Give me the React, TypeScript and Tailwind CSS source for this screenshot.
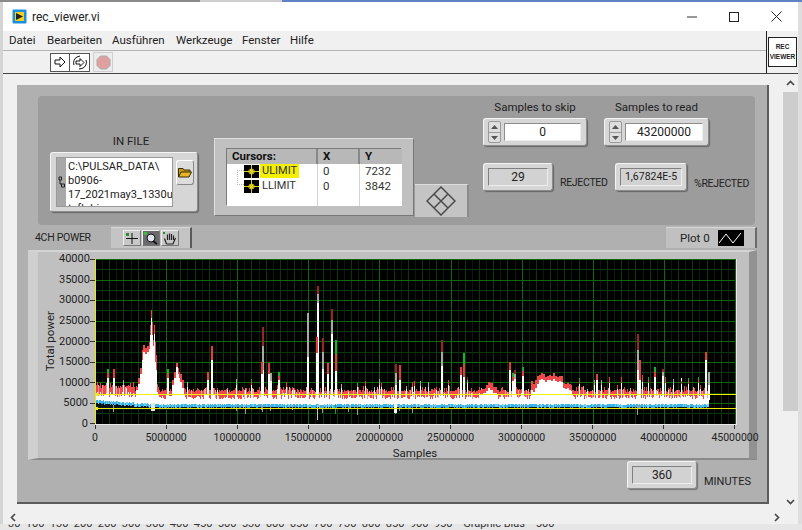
import React from "react";

const W = 641;
const H = 165;
const yv = (py: number) => py - 259;
const xv = (px: number) => px - 95;

type Spike = [number, number, string, number?];
// x, top y, kind (r red, d dark red, g grey, e green tip, w white), y where solid white starts
const spikes: Spike[] = [
  [107, 369, "e"], [113, 369, "r"], [123, 380, "g"], [126, 388, "w"], [167, 369, "e"], [187, 382, "g"], [207, 372, "r"],
  [211, 346, "r", 360], [217, 388, "r"], [227, 388, "g"], [236, 379, "g"], [245, 388, "g"], [251, 379, "e"],
  [262, 327, "d", 370], [261, 362, "r"], [268, 363, "r"], [270, 373, "g"], [278, 372, "e"], [277, 385, "r"],
  [286, 382, "r"], [292, 387, "r"], [294, 388, "r"], [307, 313, "g", 357], [317, 286, "d", 303], [316, 337, "r", 353],
  [322, 338, "d", 369], [327, 363, "r"], [331, 309, "d", 334], [335, 340, "e", 371], [341, 384, "g"], [348, 391, "g"],
  [357, 383, "e"], [365, 381, "r"], [374, 387, "g"], [379, 379, "g"], [381, 383, "r"], [395, 364, "d", 385], [399, 365, "r", 380],
  [406, 386, "g"], [412, 382, "r"], [414, 381, "r"], [420, 381, "g"], [428, 382, "g"], [436, 387, "r"], [441, 340, "d", 366],
  [448, 380, "r"], [460, 367, "r", 375], [463, 353, "e", 377], [467, 377, "d"], [509, 362, "r", 370], [512, 373, "e"],
  [514, 370, "d"], [522, 367, "e", 376], [579, 378, "e"], [587, 389, "g"], [596, 374, "r", 380], [594, 380, "g"],
  [601, 380, "g"], [609, 377, "r"], [617, 385, "r"], [621, 377, "r"], [637, 334, "d", 370], [639, 360, "r", 380],
  [642, 375, "r"], [648, 377, "e"], [654, 367, "e"], [657, 389, "r"], [662, 369, "d", 376], [665, 377, "r"], [668, 388, "r"],
  [673, 379, "g"], [681, 378, "w"], [688, 378, "e"], [698, 377, "e"], [700, 385, "r"], [705, 352, "r", 360], [708, 372, "g", 385],
];

// hump outlines: [x, red top, white top]
const humpPoints: number[][] = [
  [136, 387, 390], [138, 378, 384], [140, 368, 374], [142, 350, 360], [143, 345, 352], [145, 348, 354], [147, 346, 352],
  [149, 342, 349], [150, 325, 335], [151, 310, 318], [152, 322, 335], [153, 340, 346], [154, 325, 334], [155, 342, 362], [156, 355, 370], [157, 384, 392],
  [168, 392, 396], [172, 380, 385], [174, 372, 378], [176, 363, 367], [178, 368, 374], [179, 372, 378], [180, 374, 382], [182, 380, 388], [184, 388, 394],
  [480, 390, 395], [483, 389, 393], [486, 385, 391], [488, 382, 388], [490, 383, 390], [493, 387, 393], [497, 390, 395],
  [530, 390, 396], [531, 381, 390], [533, 384, 392], [535, 380, 388], [537, 376, 384], [539, 375, 380], [541, 373, 379], [543, 374, 380],
  [545, 377, 382], [547, 376, 380], [549, 375, 380], [551, 376, 381], [553, 373, 379], [555, 376, 381], [557, 377, 382], [559, 376, 381], [561, 376, 382],
  [563, 383, 388], [565, 384, 389], [567, 383, 388], [569, 384, 390], [571, 385, 391], [572, 390, 394],
];

function rnd(i: number) {
  const s = Math.sin(i * 12.9898) * 43758.5453;
  return s - Math.floor(s);
}

function Plot() {
  const majorX = Array.from({ length: 10 }, (_, i) => (i * 640) / 9);
  const medX = Array.from({ length: 46 }, (_, i) => (i * 640) / 45);
  const weakX = Array.from({ length: 90 }, (_, i) => (i * 640) / 90);
  const majorY = Array.from({ length: 9 }, (_, i) => (i * 164.5) / 8);
  const medY = Array.from({ length: 17 }, (_, i) => (i * 164.5) / 16);
  const cols = Array.from({ length: 709 - 96 }, (_, i) => 96 + i);
  return (
    <svg width={W} height={H} className="block" shapeRendering="crispEdges">
      <rect width={W} height={H} fill="#000" />
      {weakX.map((x) => (
        <line key={"wx" + x} x1={x + 0.5} x2={x + 0.5} y1={0} y2={H} stroke="#061e06" />
      ))}
      {medX.map((x) => (
        <line key={"mx" + x} x1={x + 0.5} x2={x + 0.5} y1={0} y2={H} stroke="#0a3a0a" />
      ))}
      {medY.map((y) => (
        <line key={"my" + y} x1={0} x2={W} y1={y + 0.5} y2={y + 0.5} stroke="#0a3a0a" />
      ))}
      {majorX.map((x) => (
        <line key={"X" + x} x1={x + 0.5} x2={x + 0.5} y1={0} y2={H} stroke="#0c6a0c" />
      ))}
      {majorY.map((y) => (
        <line key={"Y" + y} x1={0} x2={W} y1={y + 0.5} y2={y + 0.5} stroke="#0c6a0c" />
      ))}
      {cols.map((x) => {
        const bump = rnd(x + 50) > 0.82;
        const redTop = (x < 135 ? 385 : 389) + Math.round(rnd(x) * 3) - (bump ? 3 : 0);
        const whiteTop = (x < 135 ? 394 : 396) + Math.round(rnd(x + 99) * 3) - (bump ? 3 : 0);
        const blueTop = (x < 160 ? 400 + 4 * Math.min(1, (x - 96) / 60) : 404) + Math.round(rnd(x + 7) * 0.8);
        const blackBottom = x < 200 ? 409 : 407;
        return (
          <g key={x}>
            <rect x={xv(x)} y={yv(blueTop + 3)} width={1} height={Math.max(1, blackBottom - blueTop - 2)} fill="#06141e" />
            <rect x={xv(x)} y={yv(redTop)} width={1} height={whiteTop - redTop} fill={rnd(x + 3) > 0.85 ? "#f79a9a" : "#f04848"} />
            <rect x={xv(x)} y={yv(whiteTop)} width={1} height={blueTop - whiteTop} fill="#fff" />
            <rect x={xv(x)} y={yv(blueTop)} width={1} height={3} fill={rnd(x + 11) > 0.8 ? "#6fd0f0" : "#38b4e8"} />
          </g>
        );
      })}
      {humpPoints.map(([x, red, white], i) => {
        const next = humpPoints[i + 1];
        const w = next && next[0] > x && next[0] - x < 6 ? next[0] - x : 1;
        return (
          <g key={"h" + x}>
            <rect x={xv(x)} y={yv(red)} width={w} height={white - red} fill="#f04848" />
            <rect x={xv(x)} y={yv(white)} width={w} height={403 - white} fill="#fff" />
          </g>
        );
      })}
      {spikes.map(([x, top, kind, sw], i) => {
        const solid = sw ?? top + Math.round((395 - top) * 0.35);
        const tip = kind === "e" ? "#18b02c" : kind === "d" ? "#9c2424" : kind === "g" ? "#a8a8a8" : kind === "w" ? "#fff" : "#e83c3c";
        const mid = kind === "d" || kind === "g" ? "#a8a8a8" : "#e83c3c";
        const tipEnd = top + Math.max(3, Math.round((solid - top) * 0.45));
        const below = rnd(i) > 0.7 ? 2 + Math.round(rnd(i + 5) * 8) : 0;
        const w = top < 375 ? 2 : 1;
        return (
          <g key={"s" + i}>
            <rect x={xv(x)} y={yv(tipEnd)} width={w} height={Math.max(0, solid - tipEnd)} fill={mid} />
            <rect x={xv(x)} y={yv(top)} width={w} height={tipEnd - top} fill={tip} />
            <rect x={xv(x)} y={yv(solid)} width={w} height={Math.max(0, 400 - solid)} fill="#fff" />
            {below > 0 && <rect x={xv(x)} y={yv(405)} width={1} height={below} fill="#9a9a9a" />}
          </g>
        );
      })}
      <rect x={xv(317)} y={yv(405)} width={1} height={15} fill="#c8c8c8" />
      <rect x={xv(322)} y={yv(405)} width={1} height={8} fill="#9a9a9a" />
      <rect x={xv(335)} y={yv(405)} width={1} height={9} fill="#18a02c" />
      <rect x={xv(394)} y={yv(404)} width={3} height={9} fill="#e8fbff" />
      <rect x={xv(637)} y={yv(405)} width={1} height={10} fill="#9a9a9a" />
      <rect x={xv(151)} y={yv(403)} width={4} height={8} fill="#e6e6e6" />
      <line x1={0} x2={W} y1={135.5} y2={135.5} stroke="#f0f000" />
      <line x1={0} x2={W} y1={149.5} y2={149.5} stroke="#e8e800" />
      <line x1={0.5} x2={0.5} y1={0} y2={H} stroke="#e8e800" />
      <path d="M0 133 L3 135.5 L0 138 M0 147 L3 149.5 L0 152" stroke="#f0f000" fill="none" />
    </svg>
  );
}

const raised = "rounded-[3px] border border-t-[#f4f4f4] border-l-[#f4f4f4] border-r-[#8c8c8c] border-b-[#8c8c8c] bg-[#d6d6d6] shadow-[1px_1px_1px_rgba(0,0,0,0.35)]";
const sunkenIndicator = "flex items-center justify-center border border-[#808080] border-r-[#efefef] border-b-[#efefef] bg-[#d2d2d2]";
const capsLabel = "text-[10.5px] leading-[14px] tracking-[-0.3px] whitespace-nowrap";

function Spin({ value, width }: { value: string; width: string }) {
  return (
    <div className={`${raised} flex h-[28px] items-center gap-[3px] pl-[4px] pr-[5px] ${width}`}>
      <div className="flex h-[22px] w-[13px] shrink-0 flex-col gap-[1px] rounded-[2px] border border-[#9a9a9a] bg-[#dedede]">
        <div className="flex flex-1 items-center justify-center">
          <svg width="7" height="4"><path d="M3.5 0 L7 4 H0Z" fill="#555" /></svg>
        </div>
        <div className="flex flex-1 items-center justify-center border-t border-[#9a9a9a]">
          <svg width="7" height="4"><path d="M0 0 H7 L3.5 4Z" fill="#555" /></svg>
        </div>
      </div>
      <div className="flex h-[18px] flex-1 items-center justify-center border border-[#8c8c8c] border-r-[#eee] border-b-[#eee] bg-white text-[12px]">
        {value}
      </div>
    </div>
  );
}

function Indicator({ value, width, small }: { value: string; width: string; small?: boolean }) {
  return (
    <div className={`${raised} flex h-[28px] shrink-0 items-center justify-center p-[4px] ${width}`}>
      <div className={`${sunkenIndicator} h-full w-full whitespace-nowrap ${small ? "text-[10.5px]" : "text-[12px]"}`}>{value}</div>
    </div>
  );
}

function CursorIcon() {
  return (
    <svg width="15" height="13" className="shrink-0">
      <rect width="15" height="13" fill="#000" />
      <path d="M0 6.5 H15 M7.5 0 V13" stroke="#d8c820" />
      <path d="M7.5 3.5 L11 6.5 L7.5 9.5 L4 6.5Z M5.5 4.5 L9.5 8.5 M9.5 4.5 L5.5 8.5" stroke="#e8d820" fill="none" />
    </svg>
  );
}

function PaletteBtn({ children, active }: { children: React.ReactNode; active?: boolean }) {
  return (
    <div className={`flex h-[16px] w-[18px] shrink-0 items-center justify-center border border-t-[#eee] border-l-[#eee] border-r-[#777] border-b-[#777] ${active ? "bg-[#6a6a6a]" : "bg-[#c8c8c8]"}`}>
      {children}
    </div>
  );
}

export default function App() {
  const yLabels = ["40000", "35000", "30000", "25000", "20000", "15000", "10000", "5000", "0"];
  const xLabels = ["0", "5000000", "10000000", "15000000", "20000000", "25000000", "30000000", "35000000", "40000000", "45000000"];
  return (
    <div className="flex h-[530px] w-[802px] flex-col overflow-hidden bg-[#dcdcdc] text-[#222]" style={{ fontFamily: 'Roboto, "Noto Sans", sans-serif' }}>
      <div className="flex h-[2px] shrink-0">
        <div className="w-[200px] bg-[#8a8a8a]" />
        <div className="w-[82px] bg-[#cfcfcf]" />
        <div className="flex-1 bg-[#5f83c4]" />
      </div>
      <div className="flex min-h-0 flex-1">
        <div className="w-[3px] shrink-0 bg-[#d4d4d4]" />
        <div className="flex w-[795px] shrink-0 flex-col bg-[#f0f0f0]">
          {/* title bar */}
          <div className="flex h-[29px] shrink-0 items-center bg-white pl-[9px] pr-[16px]">
            <svg width="15" height="15" className="shrink-0">
              <rect x="0.5" y="0.5" width="14" height="14" rx="1" fill="#1d8fe0" />
              <rect x="3" y="3" width="9" height="9" fill="#f5d020" />
              <path d="M4 4 L11 7.5 L4 11Z" fill="#222" />
            </svg>
            <span className="ml-[5px] text-[12px] text-[#222]">rec_viewer.vi</span>
            <div className="ml-auto flex items-center gap-[32px]">
              <svg width="10" height="11"><path d="M0 6 H10" stroke="#333" /></svg>
              <svg width="10" height="10"><rect x="0.5" y="0.5" width="9" height="9" fill="none" stroke="#222" /></svg>
              <svg width="11" height="11"><path d="M0.5 0.5 L10.5 10.5 M10.5 0.5 L0.5 10.5" stroke="#222" /></svg>
            </div>
          </div>
          {/* menu + toolbar */}
          <div className="flex h-[43px] shrink-0">
            <div className="flex min-w-0 flex-1 flex-col">
              <div className="flex h-[20px] items-center border-b border-[#b4b4b4] pl-[6px] text-[11.5px]">
                <span className="w-[38px]">Datei</span>
                <span className="w-[65px]">Bearbeiten</span>
                <span className="w-[64px]">Ausführen</span>
                <span className="w-[66px]">Werkzeuge</span>
                <span className="w-[48px]">Fenster</span>
                <span>Hilfe</span>
              </div>
              <div className="flex flex-1 items-center border-b border-[#444] pl-[47px]">
                <div className="flex h-[19px] w-[40px] items-center border border-[#555] bg-white">
                  <div className="flex h-full w-[19px] items-center justify-center border-r border-[#555]">
                    <svg width="12" height="12"><path d="M1 4 H6 V1 L11 6 L6 11 V8 H1Z" fill="#fff" stroke="#111" /></svg>
                  </div>
                  <div className="flex flex-1 items-center justify-center">
                    <svg width="16" height="15">
                      <path d="M4 6 H8 V3.5 L12 7.5 L8 11.5 V9 H4Z" fill="#fff" stroke="#111" />
                      <path d="M2 10 A6.5 6.5 0 0 1 5 2 L8 1 M14 5 A6.5 6.5 0 0 1 10 13.5 L7 14" fill="none" stroke="#111" />
                    </svg>
                  </div>
                </div>
                <div className="ml-[3px] flex h-[20px] w-[20px] items-center justify-center border border-[#cfcfcf] bg-[#ececec]">
                  <svg width="15" height="15">
                    <path d="M4.5 1 H10.5 L14 4.5 V10.5 L10.5 14 H4.5 L1 10.5 V4.5Z" fill="#e0a0a0" stroke="#a8a8a8" />
                  </svg>
                </div>
              </div>
            </div>
            <div className="flex w-[32px] shrink-0 items-center border-b border-l border-b-[#444] border-l-[#222] pl-[1px]">
              <div className="flex h-[30px] w-[29px] flex-col items-center justify-center border border-[#222] bg-white text-[6.5px] font-bold leading-[10px]" style={{ fontFamily: '"Liberation Sans", sans-serif' }}>
                <span>REC</span>
                <span>VIEWER</span>
              </div>
            </div>
          </div>
          {/* content */}
          <div className="flex min-h-0 flex-1">
            <div className="min-w-0 flex-1 pl-[14px] pr-[14px] pt-[11px]">
              <div className="h-[419px] w-[752px] border-b-[2px] border-r-[2px] border-b-[#5c5c5c] border-r-[#5c5c5c] bg-[#b0b0b0] pt-[11px]">
                {/* top panel */}
                <div className="ml-[21px] flex h-[129px] w-[717px] rounded-[4px] bg-[#9c9c9c]">
                  {/* in file */}
                  <div className="ml-[12px] flex w-[148px] shrink-0 flex-col pt-[38px]">
                    <div className="pl-[14px] text-center text-[11.5px] leading-[14px]">IN FILE</div>
                    <div className={`${raised} mt-[4px] flex h-[60px] items-start gap-[3px] pl-[5px] pt-[4px]`}>
                      <div className="flex h-[50px] w-[117px] shrink-0 overflow-hidden border border-[#9a9a9a]">
                        <div className="flex w-[9px] shrink-0 items-center justify-center bg-[#a8a8a8]">
                          <svg width="7" height="13"><path d="M1 1 H3.5 V4 H1Z M3.5 8 H6.5 V11 H3.5Z M2 4 V8 H4" fill="none" stroke="#222" /></svg>
                        </div>
                        <div className="flex-1 whitespace-nowrap bg-white pl-[2px] pt-[2px] text-[11px] leading-[14px] text-[#222]">
                          C:\PULSAR_DATA\<br />b0906-<br />17_2021may3_1330u<br />tcfb.bin
                        </div>
                      </div>
                      <div className="mt-[3px] flex h-[25px] w-[18px] shrink-0 items-center justify-center rounded-[3px] border border-t-[#fff] border-l-[#fff] border-r-[#888] border-b-[#888] bg-[#dcdcdc]">
                        <svg width="14" height="11">
                          <path d="M0.5 10 V1.5 H5 L6 3 H12 V5" fill="#c89a1c" stroke="#3a2a00" />
                          <path d="M0.5 10 L3 5 H13.5 L11 10Z" fill="#e8b52a" stroke="#3a2a00" />
                        </svg>
                      </div>
                    </div>
                  </div>
                  {/* cursors */}
                  <div className="ml-[16px] mt-[42px] flex h-[78px] w-[200px] shrink-0 border border-t-[#dfdfdf] border-l-[#dfdfdf] border-r-[#777] border-b-[#777] bg-[#c0c0c0] pl-[12px] pt-[10px]">
                    <div className="flex h-[57px] w-[175px] flex-col bg-white text-[11.5px] leading-[14px] shadow-[-1px_-1px_0_#7a7a7a]">
                      <div className="flex h-[15px] bg-[#b8b8b8] font-bold text-[#111]">
                        <div className="w-[91px] border-r-[2px] border-r-[#888] pl-[5px]">Cursors:</div>
                        <div className="w-[42px] border-r-[2px] border-r-[#888] pl-[5px]">X</div>
                        <div className="flex-1 pl-[5px]">Y</div>
                      </div>
                      <div className="flex flex-1">
                        <div className="relative w-[91px] border-r border-r-[#d4d4d4] pl-[17px]">
                          <div className="absolute left-[10px] top-[6px] h-[15px] w-[7px] border border-r-0 border-dotted border-[#b8b8b8]" />
                          <div className="flex h-[14px] items-center">
                            <CursorIcon />
                            <span className="ml-[1px] bg-[#f4f000] px-[2px] text-[11px] text-[#333]">ULIMIT</span>
                          </div>
                          <div className="mt-[1px] flex h-[14px] items-center">
                            <CursorIcon />
                            <span className="ml-[1px] px-[2px] text-[11px] text-[#333]">LLIMIT</span>
                          </div>
                        </div>
                        <div className="w-[42px] border-r border-r-[#d4d4d4] pl-[5px] text-[#333]">
                          <div>0</div>
                          <div className="mt-[1px]">0</div>
                        </div>
                        <div className="flex-1 pl-[5px] text-[#333]">
                          <div>7232</div>
                          <div className="mt-[1px]">3842</div>
                        </div>
                      </div>
                    </div>
                  </div>
                  <div className="ml-[1px] mt-[88px] flex h-[33px] w-[54px] shrink-0 items-center justify-center border-r-[2px] border-t border-t-[#dcdcdc] border-r-[#8a8a8a] bg-[#c4c4c4]">
                    <svg width="30" height="30">
                      <path d="M15 1 L29 15 L15 29 L1 15Z M8 8 L22 22 M22 8 L8 22" fill="none" stroke="#4a4a4a" strokeWidth="1.5" />
                    </svg>
                  </div>
                  {/* numerics */}
                  <div className="ml-[14px] flex flex-col pt-[4px]">
                    <div className="flex">
                      <div className="w-[104px]">
                        <div className="text-center text-[11.5px] leading-[14px]">Samples to skip</div>
                        <div className="mt-[4px]"><Spin value="0" width="w-[104px]" /></div>
                      </div>
                      <div className="ml-[17px] w-[105px]">
                        <div className="text-center text-[11.5px] leading-[14px]">Samples to read</div>
                        <div className="mt-[4px]"><Spin value="43200000" width="w-[105px]" /></div>
                      </div>
                    </div>
                    <div className="mt-[17px] flex items-end">
                      <Indicator value="29" width="w-[70px]" />
                      <span className={`mb-[1px] ml-[7px] w-[55px] ${capsLabel}`}>REJECTED</span>
                      <Indicator value="1,67824E-5" width="w-[72px]" small />
                      <span className={`ml-[7px] ${capsLabel}`}>%REJECTED</span>
                    </div>
                  </div>
                </div>
                {/* chart header */}
                <div className="ml-[11px] flex h-[25px] w-[729px] items-center bg-[#b0b0b0]">
                  <span className={`ml-[7px] w-[76px] shrink-0 ${capsLabel}`}>4CH POWER</span>
                  <div className="flex h-[21px] w-[81px] shrink-0 items-center justify-center gap-[1px] border-r-[2px] border-r-[#5a5a5a] border-t border-t-[#d8d8d8] bg-[#c4c4c4]">
                    <PaletteBtn>
                      <svg width="14" height="13"><path d="M7 1 V12 M1 6.5 H13" stroke="#111" /><rect x="1" y="1" width="3" height="3" fill="#2e8b2e" /></svg>
                    </PaletteBtn>
                    <PaletteBtn active>
                      <svg width="14" height="13"><circle cx="7" cy="6" r="4" fill="#dfe4f0" stroke="#111" /><path d="M9 9 L13 12" stroke="#111" strokeWidth="1.6" /><rect x="0" y="0" width="3" height="3" fill="#38c038" /></svg>
                    </PaletteBtn>
                    <PaletteBtn>
                      <svg width="14" height="13"><path d="M3.5 12 L1.5 6.5 M4.5 8 V2.5 M6.5 8 V1.5 M8.5 8 V2 M10.5 8 V3.5 M3.5 12 H10 L12.5 6" fill="none" stroke="#222" strokeWidth="1.2" /><rect x="0" y="0" width="2" height="2" fill="#2e8b2e" /></svg>
                    </PaletteBtn>
                  </div>
                  <div className="ml-auto flex h-[21px] w-[91px] shrink-0 items-center border-t border-r-[2px] border-t-[#d8d8d8] border-r-[#6a6a6a] bg-[#c0c0c0] pl-[14px]">
                    <span className="w-[38px] text-[11.5px] leading-[14px]">Plot 0</span>
                    <div className="flex h-[16px] w-[26px] items-center justify-center bg-black">
                      <svg width="24" height="12"><path d="M0 11 L7 2 L14 11 L22 1" fill="none" stroke="#fff" /></svg>
                    </div>
                  </div>
                </div>
                {/* chart */}
                <div className="ml-[11px] flex h-[210px] w-[729px] border-b-[2px] border-l-[10px] border-r-[8px] border-t-[2px] border-b-[#8a8a8a] border-l-[#cfcfcf] border-r-[#929292] border-t-[#d4d4d4] bg-[#c0c0c0] pt-[7px]">
                  <div className="flex h-[165px] w-[21px] shrink-0 items-center justify-center pl-[2px]">
                    <span className="rotate-180 whitespace-nowrap text-[11.5px] leading-[14px] [writing-mode:vertical-rl]">Total power</span>
                  </div>
                  <div className="-mt-[7px] flex h-[179px] w-[30px] shrink-0 flex-col justify-between pr-[1px] text-right text-[11px] leading-[14px]">
                    {yLabels.map((l) => (
                      <div key={l}>{l}</div>
                    ))}
                  </div>
                  <div className="flex flex-col">
                    <div className="flex">
                      <div className="flex h-[165px] w-[6px] shrink-0 flex-col justify-between pl-[1px]">
                        {yLabels.map((l) => (
                          <div key={l} className="h-px w-[5px] bg-[#333]" />
                        ))}
                      </div>
                      <div className="border-b border-r border-b-[#e8e8e8] border-r-[#e8e8e8]">
                        <Plot />
                      </div>
                    </div>
                    <div className="ml-[6px] flex h-[4px] w-[640px] justify-between">
                      {xLabels.map((l) => (
                        <div key={l} className="h-[4px] w-px bg-[#333]" />
                      ))}
                    </div>
                    <div className="ml-[6px] mt-[2px] flex w-[640px] justify-between text-[10.5px] leading-[14px]">
                      {xLabels.map((l) => (
                        <div key={l} className="flex w-0 justify-center">
                          <span>{l}</span>
                        </div>
                      ))}
                    </div>
                    <div className="ml-[6px] mt-[1px] w-[640px] text-center text-[11.5px] leading-[14px]">Samples</div>
                  </div>
                </div>
                {/* minutes */}
                <div className="ml-[610px] mt-[1px] flex items-end">
                  <Indicator value="360" width="w-[70px]" />
                  <span className="ml-[7px] text-[11px] leading-[14px]">MINUTES</span>
                </div>
              </div>
            </div>
            {/* vertical scrollbar */}
            <div className="flex w-[15px] shrink-0 flex-col items-center bg-[#f0f0f0]">
              <div className="flex h-[18px] items-center justify-center">
                <svg width="9" height="6"><path d="M1 5 L4.5 1.5 L8 5" fill="none" stroke="#444" strokeWidth="1.6" /></svg>
              </div>
              <div className="h-[319px] w-full bg-[#cdcdcd]" />
              <div className="mt-auto flex h-[18px] items-center justify-center">
                <svg width="9" height="6"><path d="M1 1 L4.5 4.5 L8 1" fill="none" stroke="#444" strokeWidth="1.6" /></svg>
              </div>
            </div>
          </div>
          {/* horizontal scrollbar */}
          <div className="flex h-[13px] shrink-0 items-center bg-[#f0f0f0] pl-[7px] pr-[18px]">
            <svg width="6" height="9"><path d="M5 1 L1.5 4.5 L5 8" fill="none" stroke="#444" strokeWidth="1.6" /></svg>
            <svg width="6" height="9" className="ml-auto"><path d="M1 1 L4.5 4.5 L1 8" fill="none" stroke="#444" strokeWidth="1.6" /></svg>
          </div>
        </div>
        <div className="w-[4px] shrink-0 bg-[#dedede]" />
      </div>
      <div className="h-[6px] shrink-0 overflow-hidden whitespace-nowrap bg-[#e6e6e6] pl-[8px] text-[11px] leading-[11px] text-[#333]">
        <div className="-mt-[6px]">
          30&nbsp;&nbsp;100&nbsp;&nbsp;130&nbsp;&nbsp;200&nbsp;&nbsp;260&nbsp;&nbsp;300&nbsp;&nbsp;360&nbsp;&nbsp;400&nbsp;&nbsp;450&nbsp;&nbsp;500&nbsp;&nbsp;530&nbsp;&nbsp;600&nbsp;&nbsp;650&nbsp;&nbsp;700&nbsp;&nbsp;730&nbsp;&nbsp;800&nbsp;&nbsp;850&nbsp;&nbsp;900&nbsp;&nbsp;950&nbsp;&nbsp;&nbsp;&nbsp;Graphic Bias&nbsp;&nbsp;&nbsp;&nbsp;500
        </div>
      </div>
    </div>
  );
}
